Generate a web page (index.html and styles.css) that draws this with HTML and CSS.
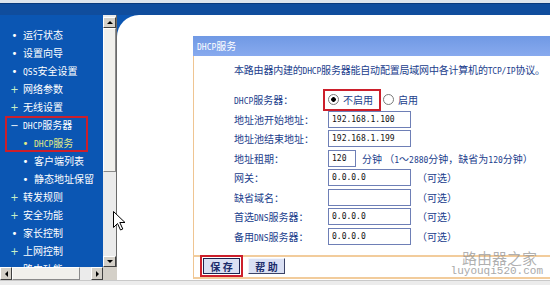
FILE: index.html
```html
<!DOCTYPE html>
<html lang="zh-CN">
<head>
    <meta charset="UTF-8">
    <meta name="viewport" content="width=device-width, initial-scale=1.0">
    <title>DHCP服务</title>
    <link rel="stylesheet" href="styles.css">
</head>
<body>
    <div class="top"></div>

    <div class="main">
      <div class="side">
        <div class="side-body">
          <div class="menu">
            <div class="item"><span class="mk">•</span>运行状态</div>
            <div class="item"><span class="mk">•</span>设置向导</div>
            <div class="item"><span class="mk">•</span><span class="en">QSS</span>安全设置</div>
            <div class="item"><span class="mk plus">+</span>网络参数</div>
            <div class="item"><span class="mk plus">+</span>无线设置</div>
            <div class="mark">
              <div class="item"><span class="mk">−</span><span class="en">DHCP</span>服务器</div>
              <div class="item sub on"><span class="mk">•</span><span class="en">DHCP</span>服务</div>
            </div>
            <div class="item sub"><span class="mk">•</span>客户端列表</div>
            <div class="item sub"><span class="mk">•</span>静态地址保留</div>
            <div class="item"><span class="mk plus">+</span>转发规则</div>
            <div class="item"><span class="mk plus">+</span>安全功能</div>
            <div class="item"><span class="mk">•</span>家长控制</div>
            <div class="item"><span class="mk plus">+</span>上网控制</div>
            <div class="item"><span class="mk">•</span>路由功能</div>
          </div>
          <div class="vbar">
            <div class="arrow up"></div>
            <div class="thumb"></div>
            <div class="track"></div>
            <div class="arrow down"></div>
          </div>
        </div>
        <div class="hbar">
          <div class="arrow left"></div>
          <div class="thumb"></div>
          <div class="track"></div>
          <div class="arrow right"></div>
          <div class="corner"></div>
        </div>
      </div>

      <div class="content">
        <div class="panel">
          <div class="panel-head"><span class="en">DHCP</span>服务</div>
          <div class="panel-body">
            <p class="intro">本路由器内建的<span class="en">DHCP</span>服务器能自动配置局域网中各计算机的<span class="en">TCP/IP</span>协议。</p>
            <div class="form">
              <div class="label"><span class="en">DHCP</span>服务器：</div>
              <div class="field">
                <label class="opt picked"><input type="radio" name="dhcp" checked>不启用</label>
                <label class="opt"><input type="radio" name="dhcp">启用</label>
              </div>

              <div class="label">地址池开始地址：</div>
              <div class="field"><input type="text" value="192.168.1.100"></div>

              <div class="label">地址池结束地址：</div>
              <div class="field"><input type="text" value="192.168.1.199"></div>

              <div class="label">地址租期：</div>
              <div class="field"><input type="text" class="short" value="120"><span>分钟 （<span class="en">1</span>～<span class="en">2880</span>分钟，缺省为<span class="en">120</span>分钟）</span></div>

              <div class="label">网关：</div>
              <div class="field"><input type="text" value="0.0.0.0"><span>（可选）</span></div>

              <div class="label">缺省域名：</div>
              <div class="field"><input type="text" value=""><span>（可选）</span></div>

              <div class="label">首选<span class="en">DNS</span>服务器：</div>
              <div class="field"><input type="text" value="0.0.0.0"><span>（可选）</span></div>

              <div class="label">备用<span class="en">DNS</span>服务器：</div>
              <div class="field"><input type="text" value="0.0.0.0"><span>（可选）</span></div>
            </div>
          </div>
          <div class="panel-foot">
            <button type="button" class="btn save">保 存</button>
            <button type="button" class="btn">帮 助</button>
          </div>
        </div>

        <div class="watermark">
          <span class="wm-cn">路由器之家</span>
          <span class="wm-en">luyouqi520.com</span>
        </div>
      </div>
    </div>

    <div class="status"></div>

    <svg class="cursor" width="13" height="20" viewBox="0 0 13 20">
      <path d="M0.5 0.5 L0.5 16.5 L4.5 12.5 L7.5 19 L9.8 18 L6.8 11.5 L12 11.5 Z" fill="#fff" stroke="#000" stroke-width="1"/>
    </svg>
</body>
</html>
```

FILE: styles.css
```css
* {
  margin: 0;
  padding: 0;
  box-sizing: border-box;
}
body {
  position: relative;
  width: 550px;
  height: 285px;
  overflow: hidden;
  font-family: "Noto Sans CJK SC", sans-serif;
  font-size: 10px;
  background-color: #ececec;
}
.en {
  font-family: "DejaVu Sans Mono", monospace;
  font-size: 8px;
}
.top {
  height: 15px;
  background-color: #104d9d;
  border-top: 3px solid #dfe5ec;
  box-shadow: inset 0 1px 0 #0a3a7c;
}
.main {
  display: flex;
  height: 265px;
  background-color: #0b56b3;
}

/* left frame */
.side {
  width: 117px;
  display: flex;
  flex-direction: column;
}
.side-body {
  flex: 1;
  min-height: 0;
  display: flex;
}
.menu {
  width: 103px;
  padding-top: 11px;
  overflow: hidden;
  color: #fff;
}
.item {
  height: 18px;
  line-height: 18px;
  padding-left: 10px;
  white-space: nowrap;
}
.item.sub {
  padding-left: 21px;
}
.mk {
  display: inline-block;
  width: 9px;
  margin-right: 4px;
  text-align: center;
  font-family: "DejaVu Sans", sans-serif;
}
.plus {
  color: #c8f0c8;
}
.mark {
  margin: 0 15px 0 5px;
  box-shadow: inset 0 0 0 2px #cc1f2b;
}
.mark .item {
  padding-left: 5px;
}
.mark .item.sub {
  padding-left: 16px;
}
.on {
  color: #e4ec86;
}

/* scrollbars */
.vbar {
  width: 14px;
  display: flex;
  flex-direction: column;
  padding-top: 2px;
  background-color: #ebebeb;
  border-right: 1px solid #6a6a6a;
}
.hbar {
  height: 13px;
  display: flex;
  background-color: #ebebeb;
}
.arrow {
  flex: none;
  display: flex;
  align-items: center;
  justify-content: center;
  background-color: #d4d0c8;
  border: 1px solid;
  border-color: #fff #404040 #404040 #fff;
}
.arrow::after {
  content: "";
  width: 0;
  height: 0;
  border: 3px solid transparent;
}
.vbar .arrow {
  height: 11px;
}
.hbar .arrow {
  width: 12px;
}
.up::after {
  border-top-width: 0;
  border-bottom-color: #000;
}
.down::after {
  border-bottom-width: 0;
  border-top-color: #000;
}
.left::after {
  border-left-width: 0;
  border-right-color: #000;
}
.right::after {
  border-right-width: 0;
  border-left-color: #000;
}
.thumb {
  flex: none;
  background-color: #f1f0ec;
  border: 1px solid;
  border-color: #fff #8a8a8a #8a8a8a #fff;
}
.vbar .thumb {
  height: 144px;
}
.hbar .thumb {
  width: 68px;
}
.track {
  flex: 1;
}
.corner {
  width: 14px;
  background-color: #d4d0c8;
}

/* main frame */
.content {
  position: relative;
  flex: 1;
  min-width: 0;
  overflow: hidden;
  background-color: #fff;
  border-top-left-radius: 22px;
  padding: 21px 0 0 76px;
}
.panel-head {
  height: 20px;
  line-height: 20px;
  padding-left: 4px;
  color: #fff;
  background: linear-gradient(#7099e4, #88aaee);
}
.panel-body {
  border-left: 1px solid #efc592;
  padding: 6px 0 9px 40px;
  color: #213d8c;
}
.intro {
  line-height: 16px;
  margin-bottom: 10px;
  letter-spacing: -0.2px;
  white-space: nowrap;
}
.form {
  display: grid;
  grid-template-columns: 94px auto;
  grid-auto-rows: 19.5px;
  align-items: center;
}
.label {
  white-space: nowrap;
}
.field {
  display: flex;
  align-items: center;
  gap: 6px;
  white-space: nowrap;
}
.field input[type=text] {
  width: 83px;
  height: 17px;
  padding: 0 3px;
  border: 1px solid #6e7fb6;
  font-family: "DejaVu Sans Mono", monospace;
  font-size: 8px;
  color: #111;
  background-color: #fff;
}
.field input.short {
  width: 28px;
}
.opt {
  display: inline-flex;
  align-items: center;
  height: 16px;
  padding: 0 5px 0 2px;
}
.opt input {
  appearance: none;
  width: 11px;
  height: 11px;
  margin-right: 4px;
  border: 1px solid #7a7a7a;
  border-radius: 50%;
  background-color: #fff;
}
.opt input:checked {
  background: radial-gradient(circle, #000 0 2px, #fff 2.6px);
}
.field .picked {
  margin-left: -2px;
  outline: 2px solid #cc1f2b;
  outline-offset: 1px;
}
.field .opt + .opt {
  margin-left: -3px;
}
.panel-foot {
  display: flex;
  gap: 8px;
  padding: 1px 0 3px 9px;
  border-left: 1px solid #efc592;
  border-top: 2px solid #f2cc9c;
  border-bottom: 2px solid #f2cc9c;
}
.btn {
  width: 37px;
  height: 16px;
  font-family: "Noto Sans CJK SC", sans-serif;
  font-size: 10px;
  font-weight: bold;
  color: #1b2c6b;
  background-color: #dae0f3;
  border: 1px solid;
  border-color: #f4f6fc #3c4366 #3c4366 #f4f6fc;
}
.btn.save {
  border-color: #1c2450;
  outline: 2px solid #cc1f2b;
  outline-offset: 1px;
}
.watermark {
  position: absolute;
  right: 7px;
  bottom: 3px;
  display: flex;
  flex-direction: column;
  align-items: flex-end;
  gap: 1px;
  color: #a9a9a9;
}
.wm-cn {
  font-size: 15px;
  line-height: 15px;
  padding-right: 6px;
  color: rgba(150, 150, 150, 0.75);
}
.wm-en {
  font-family: "Liberation Mono", monospace;
  font-size: 11px;
  line-height: 11px;
}
.status {
  height: 5px;
  border-top: 1px solid #c9c9c9;
  background-color: #ececec;
}
.cursor {
  position: absolute;
  left: 113px;
  top: 211px;
}
```
